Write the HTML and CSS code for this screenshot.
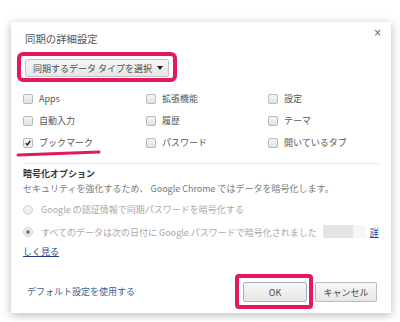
FILE: index.html
```html
<!DOCTYPE html>
<html lang="ja">
<head>
<meta charset="utf-8">
<title>同期の詳細設定</title>
<link rel="stylesheet" href="styles.css">
</head>
<body>
<div class="page">
  <div class="dialog">
    <div class="header">
      <span class="title">同期の詳細設定</span>
      <span class="close">×</span>
    </div>
    <div class="select-row">
      <button class="select">同期するデータ タイプを選択<span class="arrow"></span></button>
    </div>
    <div class="types">
      <label class="type"><span class="cb"></span>Apps</label>
      <label class="type"><span class="cb"></span>拡張機能</label>
      <label class="type"><span class="cb"></span>設定</label>
      <label class="type"><span class="cb"></span>自動入力</label>
      <label class="type"><span class="cb"></span>履歴</label>
      <label class="type"><span class="cb"></span>テーマ</label>
      <label class="type"><span class="cb checked"><svg viewBox="0 0 10 10" width="10" height="10"><path d="M2.2 5.2 L4.2 7.3 L8 2.2" fill="none" stroke="#222" stroke-width="1.7"/></svg></span>ブックマーク</label>
      <label class="type"><span class="cb"></span>パスワード</label>
      <label class="type"><span class="cb"></span>開いているタブ</label>
    </div>
    <div class="sep"></div>
    <div class="enc-title">暗号化オプション</div>
    <div class="enc-desc">セキュリティを強化するため、 Google Chrome ではデータを暗号化します。</div>
    <div class="radio disabled"><span class="rb"></span>Google の認証情報で同期パスワードを暗号化する</div>
    <div class="radio-para"><span class="nowrap"><span class="rb on"></span>すべてのデータは次の日付に Google パスワードで暗号化されました<span class="blur"></span><a class="link" href="#">詳</a></span><br><a class="link" href="#">しく見る</a></div>
    <div class="footer">
      <a class="default" href="#">デフォルト設定を使用する</a>
      <div class="buttons">
        <button class="btn ok">OK</button>
        <button class="btn">キャンセル</button>
      </div>
    </div>
    <div class="mark mark-select"></div>
    <div class="mark mark-ok"></div>
    <svg class="underline" width="90" height="10" viewBox="0 0 90 10"><path d="M3 7 Q40 5.5 84 4" fill="none" stroke="#e5185f" stroke-width="3" stroke-linecap="round"/></svg>
  </div>
</div>
</body>
</html>
```

FILE: styles.css
```css
* { box-sizing: border-box; }
html, body {
  margin: 0;
  padding: 0;
  background: #ffffff;
  width: 400px;
  height: 322px;
  overflow: hidden;
}
body {
  font-family: "Noto Sans CJK JP", "Noto Sans", sans-serif;
  font-size: 9px;
  color: #555;
}
.page {
  padding: 22px 0 0 11px;
}
.dialog {
  position: relative;
  width: 380px;
  height: 291px;
  background: #fff;
  box-shadow: 0 2px 9px rgba(0,0,0,0.28);
  padding: 10px 12px 0 12px;
}
.header {
  display: flex;
  justify-content: space-between;
  align-items: flex-start;
  height: 14px;
}
.title {
  font-size: 10.4px;
  line-height: 14px;
  color: #555;
  margin-left: 2px;
}
.close {
  font-family: "DejaVu Sans", sans-serif;
  font-size: 10px;
  line-height: 8px;
  color: #666;
  margin-top: -3px;
  margin-right: -3px;
}
.select-row {
  margin-top: 13px;
  margin-left: 2px;
  height: 18px;
}
.select {
  display: flex;
  align-items: center;
  justify-content: space-between;
  width: 144px;
  height: 18px;
  padding: 0 5px 0 7px;
  font-family: inherit;
  font-size: 9px;
  color: #4a4a4a;
  border: 1px solid #c4c4c4;
  border-radius: 2px;
  background: linear-gradient(#f6f6f6, #e6e6e6);
}
.arrow {
  width: 0;
  height: 0;
  border-left: 3px solid transparent;
  border-right: 3px solid transparent;
  border-top: 4px solid #222;
}
.types {
  margin-top: 11px;
  display: grid;
  grid-template-columns: 123px 122px 1fr;
  grid-auto-rows: 22px;
}
.type {
  display: flex;
  align-items: center;
  gap: 6px;
  color: #555;
  line-height: 14px;
}
.cb {
  width: 10px;
  height: 10px;
  border: 1px solid #b9b9b9;
  border-radius: 2px;
  background: linear-gradient(#f4f4f4, #e2e2e2);
  display: flex;
  align-items: center;
  justify-content: center;
}
.cb.checked { background: linear-gradient(#f8f8f8, #e8e8e8); }
.cb svg { display: block; }
.sep {
  margin-top: 9px;
  height: 1px;
  background: #e6e6e6;
}
.enc-title {
  margin-top: 3px;
  line-height: 14px;
  font-weight: bold;
  color: #333;
}
.enc-desc {
  margin-top: 1px;
  line-height: 14px;
  color: #7a7a7a;
}
.radio {
  margin-top: 7px;
  line-height: 14px;
  display: flex;
  align-items: center;
  color: #a8a8a8;
}
.rb {
  display: inline-block;
  width: 10px;
  height: 10px;
  border: 1px solid #cfcfcf;
  border-radius: 50%;
  background: linear-gradient(#f6f6f6, #e8e8e8);
  margin-right: 8px;
  vertical-align: -1px;
  position: relative;
}
.rb.on::after {
  content: "";
  position: absolute;
  left: 2px;
  top: 2px;
  width: 4px;
  height: 4px;
  border-radius: 50%;
  background: #7c7c7c;
}
.radio-para {
  margin-top: 6px;
  line-height: 19px;
  color: #a8a8a8;
}
.nowrap { white-space: nowrap; }
.blur {
  display: inline-block;
  width: 43px;
  height: 13px;
  margin-left: 6px;
  margin-right: 4px;
  vertical-align: -2px;
  background: linear-gradient(to right, #e4e4e4 0, #e4e4e4 68%, #f6f6f6 72%, #f6f6f6 100%);
}
.link {
  color: #2a3f8a;
  text-decoration: underline;
}
.footer {
  margin-top: 21px;
  display: flex;
  align-items: center;
  justify-content: space-between;
  margin-left: 4px;
  margin-right: 2px;
}
.default {
  color: #3d6290;
  text-decoration: none;
  line-height: 14px;
}
.buttons {
  display: flex;
  gap: 8px;
}
.btn {
  height: 20px;
  width: 62px;
  font-family: inherit;
  font-size: 9px;
  color: #4a4a4a;
  border: 1px solid #bcbcbc;
  border-radius: 2px;
  background: linear-gradient(#f7f7f7, #e6e6e6);
  padding: 0;
}
.btn.ok {
  width: 64px;
  border-color: #9fb0c4;
}
.mark {
  position: absolute;
  border: 4px solid #e5185f;
  border-radius: 6px;
}
.mark-select {
  left: 6px;
  top: 30px;
  width: 160px;
  height: 30px;
}
.mark-ok {
  left: 224px;
  top: 252px;
  width: 78px;
  height: 35px;
  border-radius: 4px;
}
.underline {
  position: absolute;
  left: 4px;
  top: 126px;
}
```
